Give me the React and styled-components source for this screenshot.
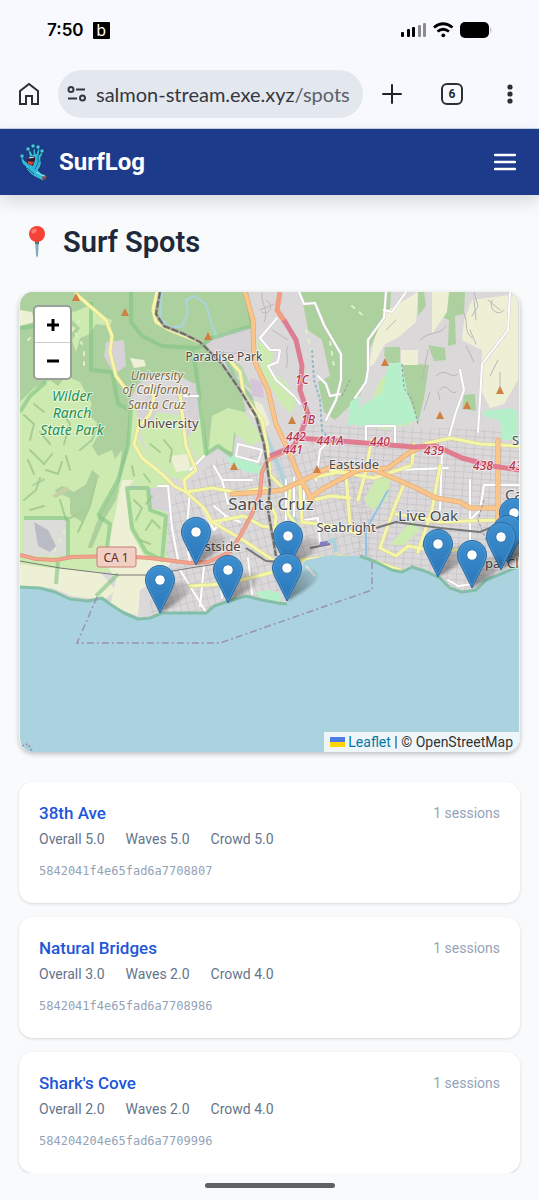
import React from "react";
import styled, { createGlobalStyle } from "styled-components";

const spots = [
  { id: "5842041f4e65fad6a7708807", name: "38th Ave", overall: "5.0", waves: "5.0", crowd: "5.0", sessions: 1 },
  { id: "5842041f4e65fad6a7708986", name: "Natural Bridges", overall: "3.0", waves: "2.0", crowd: "4.0", sessions: 1 },
  { id: "584204204e65fad6a7709996", name: "Shark's Cove", overall: "2.0", waves: "2.0", crowd: "4.0", sessions: 1 }
];

const pins = [
  [196, 532],
  [288, 536],
  [514, 513],
  [508, 530],
  [501, 537],
  [438, 544],
  [472, 555],
  [287, 568],
  [228, 570],
  [160, 580]
];

const peaks = [
  [76, 297],
  [125, 312],
  [208, 336],
  [385, 362],
  [292, 420],
  [440, 415],
  [467, 405],
  [500, 390],
  [234, 466],
  [317, 469]
];

const woods = [
  "M20 292H245L253 320 252 328 224 332 206 344 222 366 240 388 246 410 236 430 233 456 216 446 206 456 202 420 194 384 180 376 150 376 138 384 130 400 130 440 124 470 116 500 104 520 92 548 66 546 60 500 20 480Z",
  "M301 292H391L390 312 380 326 370 348 367 372 360 396 335 420 324 412 318 382 330 376 322 340 308 330Z",
  "M418 292H424L426 306 418 316ZM444 292H465L464 314 455 316 456 344 448 346 449 320 444 318ZM479 325L492 323 503 335 500 344 480 345ZM385 347H400V363H388L384 355ZM402 363L429 365 424 398 418 424 408 400ZM428 345L445 348 446 360 434 361ZM464 395L475 394 476 411 462 409Z"
];

const grasses = [
  "M20 402L34 388 50 380 58 386 66 376 80 382 92 404 88 414 98 424 98 436 92 446 98 456 112 450 116 462 102 478 92 470 86 484 74 492 62 486 52 492 44 478 30 486 20 482Z",
  "M20 492L46 480 56 492 70 498 70 514 82 522 92 500 98 478 108 468 122 450 118 482 106 504 96 524 86 552 20 552Z",
  "M58 306L74 312 88 306 98 316 112 320 110 326 96 324 90 334 80 338 76 352 72 340 80 328 70 318Z",
  "M130 404L148 410 136 432 150 458 172 480 164 490 124 484 118 490 128 450Z",
  "M140 432L156 412 184 416 186 438 196 462 186 480 172 478 150 458Z",
  "M126 490L150 486 158 508 168 514 166 558 146 552 132 530Z",
  "M194 396L202 400 206 454 198 462 188 440Z",
  "M212 416L228 408 244 412 256 428 262 440 250 446 234 432 232 452 216 446 208 454Z",
  "M256 340L274 352 270 370 288 384 296 404 290 414 278 400 262 372Z",
  "M226 332L248 328 250 340 232 346 220 342Z",
  "M350 420L370 405 380 380 392 370 408 400 412 424 385 430Z",
  "M375 480L392 476 386 500 372 510 364 500Z",
  "M390 545L412 520 420 530 404 545Z"
];

const fields = [
  "M122 480H134L126 490 130 530 144 556 172 562 158 580 140 590 138 616 110 606 116 580 104 560 112 530Z",
  "M20 564L50 568 100 572 116 590 104 600 72 596 52 588 20 586Z",
  "M385 312L418 292 416 322 400 336 384 345 374 364 368 368 374 340Z",
  "M432 292H449L447 312 432 334Z",
  "M472 300L518 294V380L504 404 490 408 480 388 482 350 462 340 464 320Z",
  "M401 350H418V365H401Z",
  "M248 398L262 404 270 424 264 428 250 414Z",
  "M20 310L32 312 34 322 20 326Z",
  "M130 358L144 360 146 366 134 368Z",
  "M170 456L188 454 190 470 176 472Z"
];

const mints = [
  "M388 365L401 362 408 395 418 420 400 425 355 426 362 405 382 394Z",
  "M482 411L512 408 518 412 518 440 502 440 500 420 484 416Z",
  "M214 334L228 336 226 350 212 348Z",
  "M350 402L360 395 358 422 348 426Z",
  "M254 593L268 590 282 594 280 602 266 600Z",
  "M226 454L244 460 262 466 262 474 246 472 230 464Z",
  "M186 412L192 410 194 418 188 420Z"
];

const minorRoads = [
  "M277 318L260 338 270 350 280 350 278 362 268 366 276 380 294 396 300 404",
  "M299 292L304 304 315 303 324 325 341 354 341 380 336 400 326 420",
  "M318 376L326 384 330 396 340 394",
  "M386 292L384 318 368 340 368 370 366 382 355 398",
  "M384 310L392 312 406 292",
  "M510 292L508 330 482 364 480 400 478 432",
  "M460 370L464 390 456 412 448 440",
  "M184 396H198M204 456L190 470",
  "M158 486H168L172 528 178 560",
  "M190 490L186 540 190 562",
  "M214 466L222 480 228 504M222 480H252",
  "M200 504L214 530 226 516 214 506M226 516L240 522",
  "M238 444L262 450 258 462 236 456Z",
  "M366 426H395V445H366Z",
  "M442 450L440 510",
  "M470 480V540L484 556",
  "M484 485H520M484 485L480 510 470 520",
  "M305 520L318 518 320 544",
  "M396 470L448 468",
  "M204 566L200 606M218 564L222 598M248 558L252 594M180 570L206 612",
  "M330 440L320 450 316 480",
  "M286 480V520M294 478V516M304 480V510",
  "M448 580L458 586 474 584"
];

const yellowRoads = [
  "M76 294L92 308 106 320 112 336 110 352 116 376 128 392",
  "M150 386L154 398 150 414 138 428 134 444 142 458 162 474 174 486 186 492 204 508 212 522 240 538 258 550 276 562",
  "M157 292L153 310 156 322 170 330 190 338 200 342",
  "M226 356L240 372 244 396 262 420 268 450 270 475 285 490",
  "M180 394L184 430 186 446 196 470 184 480 186 492 212 488 240 493 262 488 280 492",
  "M212 522L244 516 262 526 290 530",
  "M190 586L224 584 258 576 280 570",
  "M268 500L276 516 274 540M290 490L288 514 300 530",
  "M300 486L302 522 332 526 360 534",
  "M330 470L350 474 374 478 410 466",
  "M346 474L350 524",
  "M292 484L310 478 350 470M306 502L330 496 350 498",
  "M358 500L364 478 372 440",
  "M404 484L394 508 380 548 396 556 408 546 440 552 470 548",
  "M440 466L432 510 418 552",
  "M396 514L440 522 498 520",
  "M424 444L450 438 480 444 520 446",
  "M412 464L414 444",
  "M300 560L340 556 376 562 400 570"
];

const orangeRoads = [
  "M245 292L253 320 254 360 268 390 276 424 288 450 300 478 312 500",
  "M310 498L324 488 366 466 384 474 412 486 436 498 460 502 470 508 518 508",
  "M498 440V560",
  "M232 494L264 492 282 490 304 480 332 466 358 470 388 468 410 452 424 446"
];

const streets = [
  "M262 292C260 304 270 310 264 322M272 330L288 340M260 310L274 304",
  "M420 340C430 330 440 336 446 326M422 380L428 350M436 376C446 366 450 380 458 374",
  "M462 310C470 320 462 330 472 338M476 320L474 300M488 300L500 310M498 360L490 376",
  "M440 390C446 380 450 396 456 392M386 330L396 320M466 346L474 362",
  "M474 292L478 306 472 316M470 330L476 344M492 300C488 312 500 316 504 310M500 372V392M430 392L424 410M440 400L438 392",
  "M266 300C276 306 268 316 262 312M288 346C284 352 290 360 286 368M212 356C226 348 234 358 244 350"
];

const highway =
  "M20 555L36 559 56 560 72 557 120 556 150 558 190 563 208 562 230 552 240 536 252 514 260 494 262 472 268 460 296 446";

const Line = ({ list, color, width, casing }) => (
  <g fill="none" strokeLinecap="round" strokeLinejoin="round">
    {casing && list.map(d => <path key={"c" + d} d={d} stroke={casing} strokeWidth={width + 1} />)}
    {list.map(d => (
      <path key={d} d={d} stroke={color} strokeWidth={width} />
    ))}
  </g>
);

const land =
  "M20 292H520V566L500 573 486 580 476 590 462 592 450 588 440 578 425 571 412 567 402 572 392 570 376 562 360 556 330 555 306 560 296 574 290 592 287 604 278 603 262 600 246 596 232 600 214 606 206 613 190 612 174 612 162 613 150 618 138 619 124 613 110 604 102 598 88 601 70 599 55 592 40 588 20 587Z";

const SpotMap = () => (
  <MapSvg viewBox="20 292 499 460" preserveAspectRatio="xMidYMid slice" role="img" aria-label="Map of surf spots">
    <defs>
      <clipPath id="land">
        <path d={land} />
      </clipPath>
      <pattern id="blocks" width="7" height="9" patternUnits="userSpaceOnUse" patternTransform="rotate(-14)">
        <path d="M0 0H7M0 0V9" stroke="#bdbabe" strokeWidth="1" />
      </pattern>
      <pattern id="blocksEast" width="9" height="6" patternUnits="userSpaceOnUse" patternTransform="rotate(4)">
        <path d="M0 0H9M0 0V6" stroke="#bdbabe" strokeWidth="1" />
      </pattern>
      <linearGradient id="pin" x1="0" x2="0" y1="0" y2="1">
        <stop offset="0" stopColor="#3d8fd0" />
        <stop offset="1" stopColor="#2a76b8" />
      </linearGradient>
      <linearGradient id="shade" x1="0" x2="1" y1="1" y2="0">
        <stop offset="0" stopColor="#000" stopOpacity="0.45" />
        <stop offset="1" stopColor="#000" stopOpacity="0.05" />
      </linearGradient>
      <filter id="soft" x="-30%" y="-30%" width="160%" height="160%">
        <feGaussianBlur stdDeviation="1.6" />
      </filter>
      <g id="marker">
        <path d="M0 33L10 8C16-2 34 0 30 10 27 18 8 28 0 33Z" fill="url(#shade)" filter="url(#soft)" />
        <path
          d="M0-14.5C-8.200-14.500-14.500-8-14.500 0c0 4 1.600 7 3 10L0 33 11.500 10c1.400-3 3-6 3-10C14.500-8 8.200-14.500 0-14.500Z"
          fill="url(#pin)"
          stroke="#2d6ca2"
        />
        <path d="M0-13.300C-7.600-13.300-13.300-7.400-13.300 0c0 3.600 1.500 6.500 2.800 9.500L0 30.500 10.500 9.500c1.300-3 2.800-5.900 2.800-9.500C13.300-7.400 7.600-13.300 0-13.300Z" fill="none" stroke="#5a9fd2" strokeOpacity="0.6" />
        <circle r="5.200" fill="#fff" stroke="#2d6ca2" strokeWidth="0.800" />
      </g>
    </defs>

    <rect x="20" y="292" width="500" height="460" fill="#aad3df" />
    <path d={land} fill="#dbd8da" />
    <g clipPath="url(#land)">
      <path d="M170 500L215 460 300 445 372 470V620H150V580Z" fill="url(#blocks)" />
      <path d="M300 425L520 430V600H372L340 500Z" fill="url(#blocksEast)" />
      <path d="M20 480H124L170 560 146 572 20 572Z" fill="#cdebb0" />
      {woods.map(d => <path key={d} d={d} fill="#add19e" />)}
      {grasses.map(d => <path key={d} d={d} fill="#cdebb0" />)}
      {fields.map(d => <path key={d} d={d} fill="#eef0d5" />)}
      {mints.map(d => <path key={d} d={d} fill="#b5f0cb" />)}
      <path d="M106 342L124 340 126 366 114 374 104 356Z" fill="#d6d2d6" />
      <path d="M136 410L152 390 160 406 150 426 140 426Z" fill="#d6d2d6" />
      <path d="M176 392L196 382 200 400 200 420 186 440 182 420Z" fill="#d6d2d6" />
      <path d="M148 488H168L172 512 150 508Z" fill="#d6d2d6" />
      <path d="M206 342L220 334 252 327 252 358 228 350 212 352Z" fill="#d6d2d6" />
      <path d="M224 354L242 366 254 392 244 384 232 370Z" fill="#b9d6b4" />
      <path d="M24 520H68V556H24Z" fill="#dcdcd8" />
      <path d="M34 522L48 530 56 546 50 552 38 546Z" fill="#b9bcc5" />
      <path d="M52 496L66 486 70 490 56 498Z" fill="#c6cfa8" />
      <path d="M250 378L262 382 264 398 252 396Z" fill="#d6c5d8" />
      <g fill="none" stroke="#a6cd94" strokeWidth="2" strokeLinecap="round">
        <path d="M24 500L36 490 40 478M30 450L44 464 52 454M40 432L50 444M60 500L66 520 82 512M96 480L90 506 78 532M24 415L34 424 30 440" />
        <path d="M60 410L70 424 64 444M80 450L92 440 98 424M28 460L34 474M46 470L58 474 62 462M34 404L44 412M70 470L66 456M30 510L44 506" />
        <path d="M134 500L142 508 136 520M146 530L152 520 160 528M140 540L150 544M152 496L146 504" />
        <path d="M150 444L160 452M164 440L172 450 170 462M144 474L150 482M132 466L134 476" />
      </g>
      <g fill="none" stroke="#dff0c8" strokeWidth="2" strokeDasharray="3 7" strokeLinecap="round">
        <path d="M60 308L82 344M84 352V372M80 320L70 334M50 560L66 528M28 340L34 334M306 330L314 360M330 342L334 366M352 306L366 318" />
      </g>
      <g fill="none" stroke="#7fc383" strokeOpacity="0.6" strokeWidth="4" strokeLinejoin="round">
        <path d="M20 328L36 326M91 302V370L112 372 118 404 131 410 128 446 118 480 98 516" />
        <path d="M131 292V322L142 336 162 346 198 348 212 338 252 326 246 292" />
        <path d="M46 382L30 396 20 412M68 520V558M24 518H68M98 516L110 524 106 558" />
        <path d="M192 350L196 370 202 420 206 454 218 446 232 456M127 488H148L150 510 166 516 162 560 146 552 132 528Z" />
        <path d="M222 352L236 380 250 396 264 440M58 562L56 584M118 574L96 596" />
      </g>
      <g fill="none" stroke="#aad3df" strokeWidth="2">
        <path d="M162 292L160 318 170 328 182 326 188 312 186 300 194 296 206 304 212 326 216 334" />
        <path d="M264 430L280 470 290 500 296 524" strokeWidth="4" />
        <path d="M312 350L314 380 320 400 322 430 330 440" stroke="#8ebccd" strokeDasharray="3 2" />
        <path d="M366 556L366 530 376 512 388 490" stroke="#8ec5e2" />
        <path d="M325 544L334 540 336 552" strokeWidth="4" />
      </g>
      <Line list={streets} color="#b9b6bb" width={1} />
      <Line list={minorRoads} color="#fff" width={2} casing="#cfcdd0" />
      <Line list={yellowRoads} color="#f6f6a8" width={3} casing="#d6d294" />
      <Line list={orangeRoads} color="#fac58a" width={4} casing="#dfa36c" />
      <g fill="none" strokeLinejoin="round">
        <path d={highway} stroke="#e49580" strokeWidth="4" />
        <path d={highway} stroke="#f5a48e" strokeWidth="2" />
        <path d="M280 292L277 310 285 322" stroke="#f19d80" strokeWidth="5" />
        <path d="M284 320L296 340 302 366 300 390 308 414 302 430 294 446 270 456" stroke="#dc7d92" strokeWidth="5" />
        <path d="M296 438L340 441 414 447 436 446 462 458 492 466 520 470" stroke="#e07b90" strokeWidth="5" />
        <path d="M160 292L156 314 164 326 184 334 200 342 222 364 240 390 256 416 264 444 270 486 268 510 276 556" stroke="#aaa9a2" strokeWidth="3" />
        <path d="M160 292L156 314 164 326 184 334 200 342 222 364 240 390 256 416 264 444 270 486 268 510 276 556" stroke="#6d6b68" strokeWidth="2" strokeDasharray="7 2" />
        <path d="M20 561L60 568 118 575 150 575 190 568 216 564" stroke="#777" strokeWidth="1" />
        <path d="M246 548L266 561 282 562M310 548L330 544M376 528L396 522 440 528 480 532 500 524" stroke="#777" strokeWidth="2" />
        <path d="M402 364L404 388 412 400 418 424M484 500L478 520 486 540M350 380L342 396" stroke="#9393a5" strokeWidth="1" strokeDasharray="3 2" />
      </g>
      <path d="M320 542L328 541 327 545 319 546Z" fill="#837bc8" />
    </g>
    <path
      d="M20 587L40 588 55 592 70 599 88 601 102 598 110 604 124 613 138 619 150 618 162 613 206 613 214 606 232 600 246 596 262 600 278 603 287 604M360 556L376 562 392 570 402 572 412 567 425 571 440 578 450 588 462 592 476 590 486 580 520 566"
      fill="none"
      stroke="#74b99b"
      strokeWidth="3"
      strokeOpacity="0.800"
      strokeLinejoin="round"
    />
    <path d="M97 597L77 643H220L372 590V562" fill="none" stroke="#9a91b5" strokeWidth="1.500" strokeDasharray="7 3 2 3" />
    <path d="M22 746L28 744 32 751" fill="none" stroke="#9a91b5" strokeWidth="2" strokeDasharray="2 2" />
    <path d="M306 566L315 576" stroke="#e2e2df" strokeWidth="2" />

    {peaks.map(([x, y]) => (
      <path key={x} d={`M${x} ${y - 4}l4 8h-8z`} fill="#d08040" />
    ))}

    <g fontFamily="'Noto Sans', sans-serif" textAnchor="middle" stroke="#fff" strokeOpacity="0.600" strokeWidth="2" paintOrder="stroke" strokeLinejoin="round">
      <g fill="#24924f" fontSize="14" fontStyle="italic">
        <text x="72" y="401">Wilder</text>
        <text x="72" y="418">Ranch</text>
        <text x="72" y="435">State Park</text>
      </g>
      <g fill="#7c6a48" fontSize="12" fontStyle="italic">
        <text x="157" y="380">University</text>
        <text x="157" y="394">of California,</text>
        <text x="157" y="409">Santa Cruz</text>
      </g>
      <g fill="#4b4a4c" fontSize="13">
        <text x="168" y="428">University</text>
        <text x="224" y="361" fontSize="12">Paradise Park</text>
        <text x="354" y="469">Eastside</text>
        <text x="346" y="532">Seabright</text>
        <text x="213" y="551">Westside</text>
        <text x="506" y="568">Opal Cliffs</text>
        <text x="271" y="510" fontSize="17">Santa Cruz</text>
        <text x="428" y="521" fontSize="15">Live Oak</text>
        <text x="505" y="500" fontSize="15" textAnchor="start">Capitola</text>
        <text x="512" y="445" textAnchor="start">Soquel</text>
      </g>
      <g fill="#b8354e" fontSize="12" fontStyle="italic" fontWeight="500">
        <text x="302" y="384">1C</text>
        <text x="305" y="411">1</text>
        <text x="308" y="424">1B</text>
        <text x="296" y="441">442</text>
        <text x="293" y="454">441</text>
        <text x="330" y="445">441A</text>
        <text x="380" y="446">440</text>
        <text x="434" y="455">439</text>
        <text x="483" y="470">438</text>
        <text x="519" y="470">437</text>
      </g>
    </g>
    <rect x="97" y="547" width="39" height="20" rx="2" fill="#f2cfc5" stroke="#c97f70" />
    <text x="116" y="562" textAnchor="middle" fontFamily="'Noto Sans', sans-serif" fontSize="12" fill="#5d2f28">CA 1</text>

    {pins.map(([x, y]) => (
      <use key={x} href="#marker" x={x} y={y} />
    ))}
  </MapSvg>
);

const HandLogo = () => (
  <svg width="30" height="38" viewBox="0 0 30 38" aria-hidden="true">
    <path
      d="M2 14l2-2 1 5 4 3 2-4-2-8 2-1 3 5 0-6 2-1 1 6 2-6 2 1-1 6 2-3 2 1-2 6c1 4 0 8-3 11l3 3 5 2-3 6-8-4c-5-3-8-6-10-11-3-1-4-5-4-8Z"
      fill="#35b6dc"
      stroke="#123c5c"
      strokeLinejoin="round"
    />
    <g fill="#49cbe9" stroke="#123c5c" strokeWidth="0.600">
      <circle cx="9" cy="6" r="2" />
      <circle cx="14" cy="3" r="2" />
      <circle cx="19" cy="4" r="2" />
      <circle cx="23" cy="8" r="2" />
      <circle cx="3" cy="13" r="2" />
    </g>
    <path d="M11 14c3-2 6-1 5 3l-2 6-5-2c-2-3 0-5 2-7Z" fill="#281f2c" />
    <path d="M9 18l6 1-2 3-4-1Z" fill="#cf4637" />
    <path d="M10 15l5-1" stroke="#f4f4ee" />
    <path d="M19 12l0 8-3 6M8 25l7 6M22 13l-1 6" fill="none" stroke="#156986" />
    <path d="M24 32l4 1-2 4-3-1Z" fill="#8a4a4a" />
    <path d="M17 29l5 3 4 1" fill="none" stroke="#8eeaf4" />
  </svg>
);

const PushPin = () => (
  <svg width="22" height="34" viewBox="0 0 22 34" aria-hidden="true">
    <path d="M9 14h4l-1 16-1 3-1-3Z" fill="#84a9b8" />
    <path d="M9 14h4v5H9Z" fill="#51747f" />
    <circle cx="11" cy="9" r="8" fill="#f44336" />
    <ellipse cx="8" cy="6" rx="3" ry="2" fill="#ff7a6b" transform="rotate(-35 8 6)" />
  </svg>
);

const App = () => (
  <Page>
    <GlobalStyle />
    <StatusBar>
      <Clock>
        7:50 <AppBadge>b</AppBadge>
      </Clock>
      <svg width="92" height="18" viewBox="0 0 92 18" aria-hidden="true">
        <rect x="1" y="11" width="3" height="5" rx="1" />
        <rect x="7" y="8" width="3" height="8" rx="1" />
        <rect x="12" y="6" width="3" height="10" rx="1" />
        <g fill="#8d8d91">
          <rect x="18" y="4" width="3" height="12" rx="1" />
          <rect x="23" y="2" width="3" height="14" rx="1" />
        </g>
        <g fill="none" stroke="#000" strokeWidth="2.800">
          <path d="M34 6.500Q43-1 52.500 6.500" />
          <path d="M37.500 10.500Q43 6 49 10.500" />
        </g>
        <circle cx="43.300" cy="14.300" r="1.900" />
        <rect x="60" y="1" width="29" height="16" rx="5" />
        <path d="M90 6c2 1 2 5 0 6Z" fill="#c4c5c9" />
      </svg>
    </StatusBar>

    <BrowserBar>
      <IconButton aria-label="Home">
        <svg width="22" height="24" viewBox="0 0 22 24" fill="none" stroke="#2c2f36" strokeWidth="2">
          <path d="M2 9L11 2l9 7v13h-6v-8H8v8H2Z" />
        </svg>
      </IconButton>
      <AddressBar>
        <svg width="20" height="16" viewBox="0 0 20 16" fill="none" stroke="#34373e" strokeWidth="2">
          <circle cx="4" cy="3.500" r="2.500" />
          <path d="M9 3.500h9M1 12.500h9" />
          <circle cx="15.500" cy="12" r="2.500" />
        </svg>
        <span>
          salmon-stream.exe.xyz<Path>/spots</Path>
        </span>
      </AddressBar>
      <IconButton aria-label="New tab">
        <svg width="20" height="20" viewBox="0 0 20 20" stroke="#202329" strokeWidth="2">
          <path d="M10 1v18M1 10h18" strokeLinecap="round" />
        </svg>
      </IconButton>
      <TabsButton aria-label="6 open tabs">6</TabsButton>
      <IconButton aria-label="More">
        <svg width="6" height="20" viewBox="0 0 6 20" fill="#2c2f36">
          <circle cx="3" cy="3" r="2.600" />
          <circle cx="3" cy="10" r="2.600" />
          <circle cx="3" cy="17" r="2.600" />
        </svg>
      </IconButton>
    </BrowserBar>

    <Header>
      <Brand href="#home">
        <HandLogo />
        SurfLog
      </Brand>
      <IconButton aria-label="Menu">
        <svg width="22" height="18" viewBox="0 0 22 18" stroke="#fff" strokeWidth="2.400" strokeLinecap="round">
          <path d="M1 2h20M1 9h20M1 16h20" />
        </svg>
      </IconButton>
    </Header>

    <Main>
      <Title>
        <PushPin />
        Surf Spots
      </Title>
      <MapPanel>
        <SpotMap />
        <ZoomControl>
          <ZoomButton aria-label="Zoom in">
            <svg width="14" height="14" viewBox="0 0 14 14" stroke="#000" strokeWidth="3">
              <path d="M7 1v12M1 7h12" />
            </svg>
          </ZoomButton>
          <ZoomButton aria-label="Zoom out">
            <svg width="14" height="14" viewBox="0 0 14 14" stroke="#000" strokeWidth="3">
              <path d="M1 7h12" />
            </svg>
          </ZoomButton>
        </ZoomControl>
        <Attribution>
          <svg width="15" height="10" viewBox="0 0 15 10" aria-hidden="true">
            <path fill="#4c7be1" d="M0 0h15v5H0z" />
            <path fill="#ffd500" d="M0 5h15v5H0z" />
          </svg>{" "}
          <a href="#leaflet">Leaflet</a> | © OpenStreetMap
        </Attribution>
      </MapPanel>

      <SpotList>
        {spots.map(spot => (
          <SpotCard key={spot.id}>
            <CardTop>
              <SpotName href={"#" + spot.id}>{spot.name}</SpotName>
              <Sessions>{spot.sessions} sessions</Sessions>
            </CardTop>
            <Ratings>
              <span>Overall {spot.overall}</span>
              <span>Waves {spot.waves}</span>
              <span>Crowd {spot.crowd}</span>
            </Ratings>
            <SpotId>{spot.id}</SpotId>
          </SpotCard>
        ))}
      </SpotList>
    </Main>
    <HomeArea>
      <HomeIndicator />
    </HomeArea>
  </Page>
);

export default App;

const GlobalStyle = createGlobalStyle`
  * {
    box-sizing: border-box;
  }

  body {
    margin: 0;
    background: #f8fafc;
    color: #1e293b;
    font-family: Roboto, sans-serif;
  }

  svg {
    flex: none;
  }
`;

const Page = styled.div`
  display: flex;
  flex-direction: column;
`;

const StatusBar = styled.div`
  display: flex;
  align-items: center;
  justify-content: space-between;
  height: 60px;
  padding: 0 47px;
  background: #f8f9fe;
`;

const Clock = styled.div`
  display: flex;
  align-items: center;
  gap: 9px;
  color: #000;
  font: 600 17px Inter, sans-serif;
`;

const AppBadge = styled.span`
  width: 17px;
  height: 17px;
  border-radius: 1px;
  background: #000;
  color: #fff;
  font: 16px/16px "Noto Sans", sans-serif;
  text-align: center;
`;

const BrowserBar = styled.div`
  display: flex;
  align-items: center;
  gap: 18px;
  height: 69px;
  padding: 0 18px;
  background: #f8f9fe;
  border-bottom: 1px solid #c9d2e6;
`;

const Button = styled.button`
  padding: 0;
  border: 0;
  background: none;
  color: inherit;
  cursor: pointer;
`;

const IconButton = styled(Button)`
  display: flex;
  align-items: center;
  justify-content: center;
  min-width: 22px;
  height: 40px;
`;

const AddressBar = styled(Button)`
  display: flex;
  flex: 1;
  align-items: center;
  gap: 9px;
  min-width: 0;
  height: 48px;
  padding: 0 9px;
  border-radius: 24px;
  background: #e3e7ee;
  color: #34373e;
  font: 20px Lato, sans-serif;
  white-space: nowrap;
`;

const Path = styled.span`
  color: #5c6068;
`;

const TabsButton = styled(Button)`
  width: 22px;
  height: 22px;
  margin: 0 18px 0 20px;
  border: 2px solid #2c2f36;
  border-radius: 6px;
  font: 700 12px Roboto, sans-serif;
`;

const Header = styled.header`
  display: flex;
  align-items: center;
  justify-content: space-between;
  height: 66px;
  padding: 0 23px 0 19px;
  background: #1e3a8a;
  box-shadow: 0 6px 16px rgba(0, 0, 0, 0.14);
`;

const Brand = styled.a`
  display: flex;
  align-items: center;
  gap: 10px;
  color: #fff;
  font-size: 24px;
  font-weight: 700;
  text-decoration: none;
`;

const Main = styled.main`
  padding: 0 19px;
  overflow: hidden;
`;

const Title = styled.h1`
  display: flex;
  align-items: center;
  gap: 15px;
  height: 34px;
  margin: 30px 7px 33px;
  font-size: 29px;
  font-weight: 600;
`;

const MapPanel = styled.section`
  position: relative;
  height: 460px;
  overflow: hidden;
  border: solid #eef1f5;
  border-width: 0 1px;
  border-radius: 14px;
  box-shadow: 0 2px 5px rgba(0, 0, 0, 0.24);
`;

const MapSvg = styled.svg`
  display: block;
  width: 100%;
  height: 100%;
`;

const ZoomControl = styled.div`
  position: absolute;
  top: 13px;
  left: 13px;
  display: flex;
  flex-direction: column;
  overflow: hidden;
  border: 2px solid #9a9f98;
  border-radius: 5px;
  background: #fff;
`;

const ZoomButton = styled(Button)`
  display: flex;
  align-items: center;
  justify-content: center;
  width: 35px;
  height: 35px;

  & + & {
    height: 36px;
    border-top: 1px solid #ccc;
  }
`;

const Attribution = styled.div`
  position: absolute;
  right: 0;
  bottom: 0;
  padding: 0 6px;
  background: rgba(255, 255, 255, 0.8);
  color: #333;
  font-size: 14px;
  line-height: 20px;

  a {
    color: #0078a8;
    text-decoration: none;
  }
`;

const SpotList = styled.div`
  display: grid;
  gap: 14px;
  margin-top: 30px;
`;

const SpotCard = styled.article`
  padding: 19px 20px 21px;
  border-radius: 14px;
  background: #fff;
  box-shadow: 0 1px 3px rgba(0, 0, 0, 0.14);
`;

const CardTop = styled.div`
  display: flex;
  align-items: center;
  justify-content: space-between;
  line-height: 24px;
`;

const SpotName = styled.a`
  color: #1d56d8;
  font-size: 17px;
  font-weight: 500;
  text-decoration: none;
`;

const Sessions = styled.span`
  color: #94a3b8;
  font-size: 14px;
`;

const Ratings = styled.div`
  display: flex;
  gap: 21px;
  margin-top: 4px;
  color: #64748b;
  font-size: 14px;
  line-height: 20px;
`;

const SpotId = styled.div`
  margin-top: 11px;
  color: #94a3b8;
  font: 12px/22px "DejaVu Sans Mono", monospace;
`;

const HomeArea = styled.footer`
  display: flex;
  justify-content: center;
  padding: 10px 0 14px;
`;

const HomeIndicator = styled.div`
  width: 130px;
  height: 5px;
  border-radius: 3px;
  background: #606164;
`;
